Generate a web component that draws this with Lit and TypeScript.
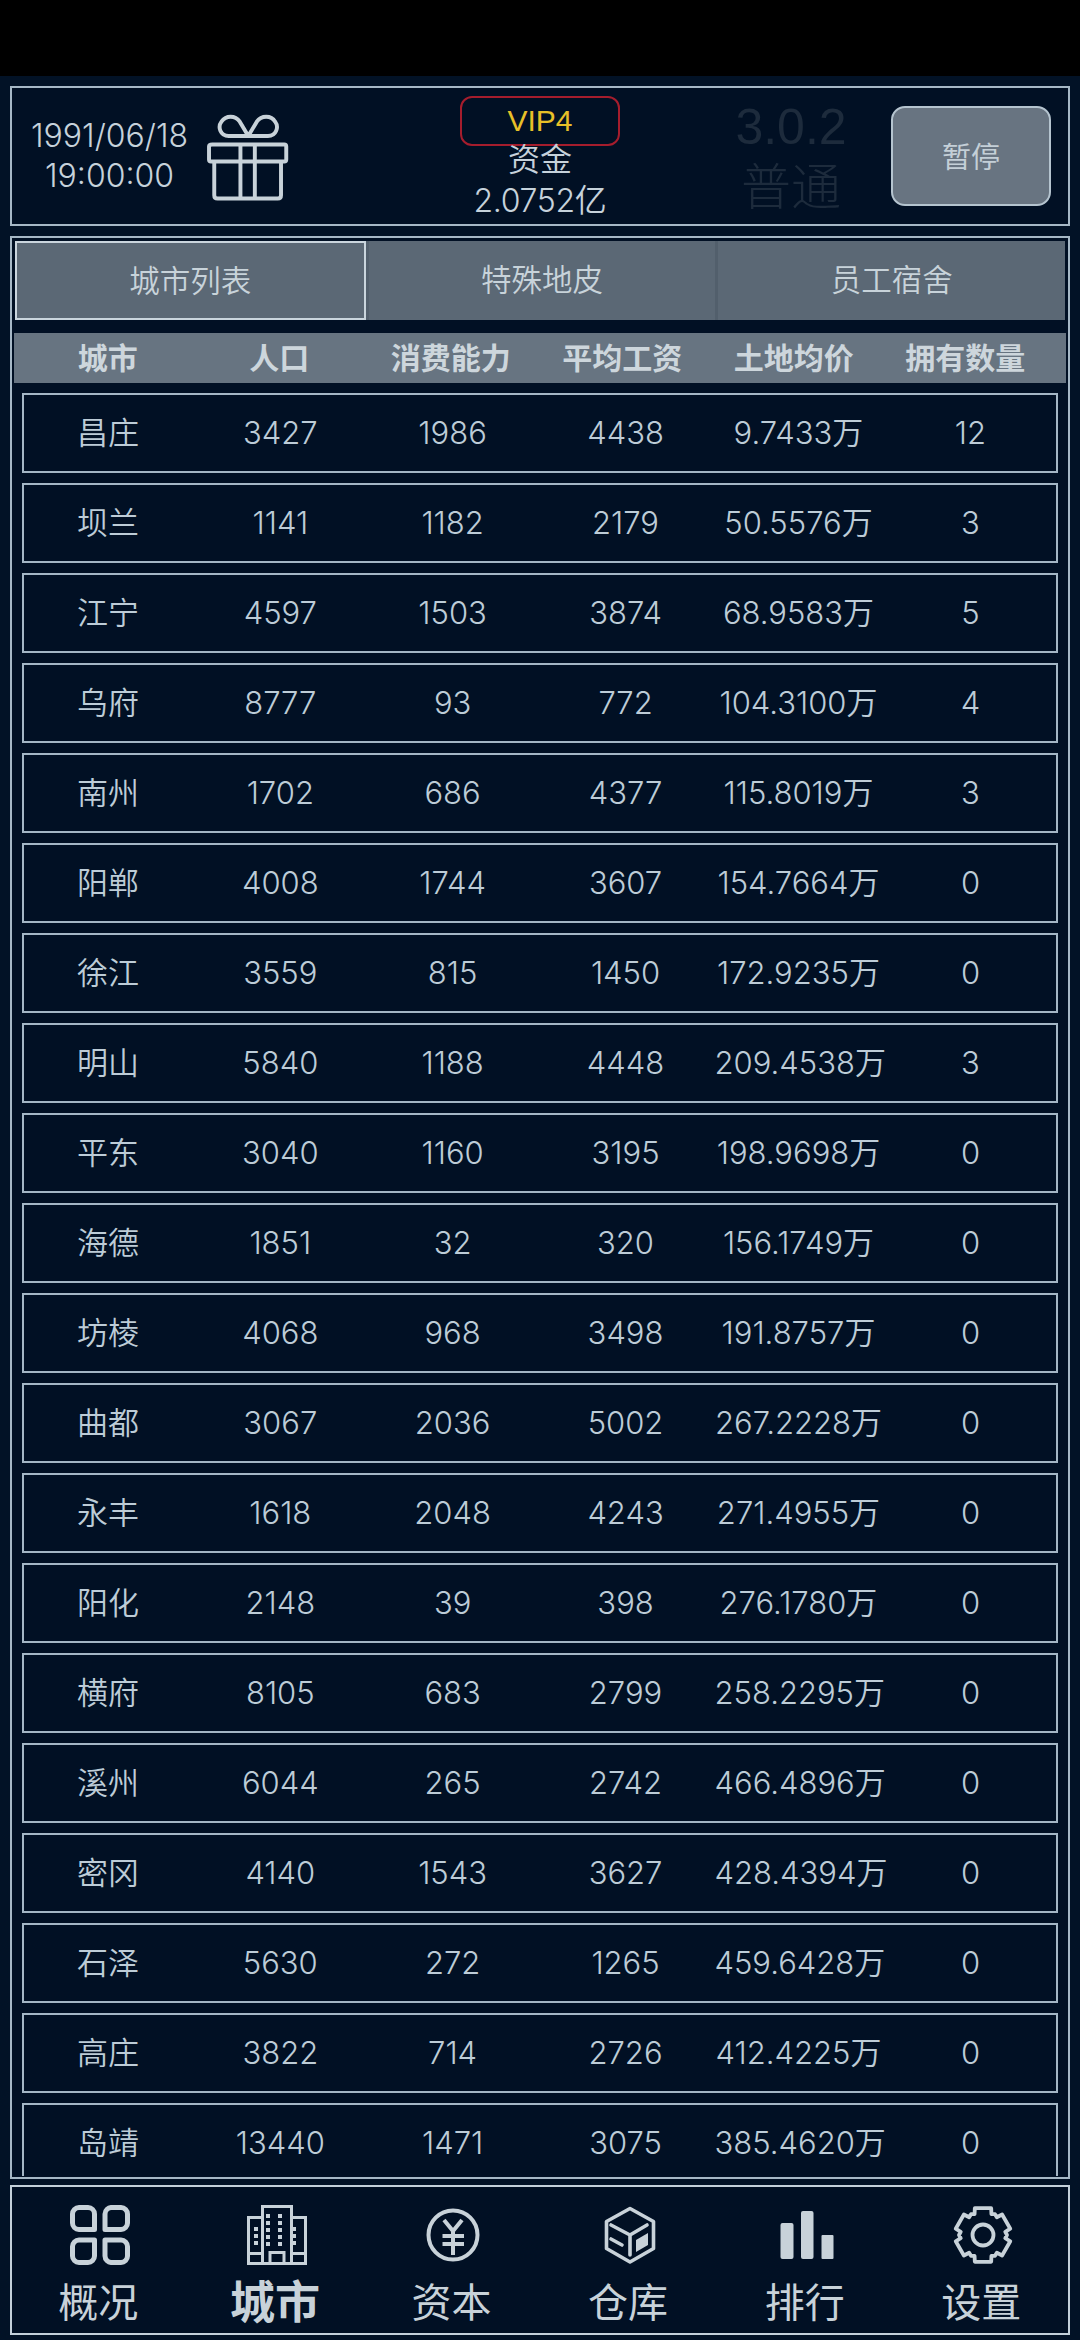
import { LitElement, html, css, svg } from "lit";
import { customElement } from "lit/decorators.js";

const ROWS: string[][] = [
  ["昌庄","3427","1986","4438","9.7433万","12"],
  ["坝兰","1141","1182","2179","50.5576万","3"],
  ["江宁","4597","1503","3874","68.9583万","5"],
  ["乌府","8777","93","772","104.3100万","4"],
  ["南州","1702","686","4377","115.8019万","3"],
  ["阳郸","4008","1744","3607","154.7664万","0"],
  ["徐江","3559","815","1450","172.9235万","0"],
  ["明山","5840","1188","4448","209.4538万","3"],
  ["平东","3040","1160","3195","198.9698万","0"],
  ["海德","1851","32","320","156.1749万","0"],
  ["坊棱","4068","968","3498","191.8757万","0"],
  ["曲都","3067","2036","5002","267.2228万","0"],
  ["永丰","1618","2048","4243","271.4955万","0"],
  ["阳化","2148","39","398","276.1780万","0"],
  ["横府","8105","683","2799","258.2295万","0"],
  ["溪州","6044","265","2742","466.4896万","0"],
  ["密冈","4140","1543","3627","428.4394万","0"],
  ["石泽","5630","272","1265","459.6428万","0"],
  ["高庄","3822","714","2726","412.4225万","0"],
  ["岛靖","13440","1471","3075","385.4620万","0"],
];
const HEAD = ["城市","人口","消费能力","平均工资","土地均价","拥有数量"];

function gearPath(cx: number, cy: number): string {
  const pts: string[] = [];
  const p = (r: number, deg: number) => {
    const a = ((deg - 90) * Math.PI) / 180;
    return `${(cx + r * Math.cos(a)).toFixed(2)} ${(cy + r * Math.sin(a)).toFixed(2)}`;
  };
  for (let i = 0; i < 6; i++) {
    const a = i * 60;
    pts.push(p(22.5, a - 22), p(28, a - 17), p(28, a + 17), p(22.5, a + 22), p(24, a + 30));
  }
  return "M" + pts.join("L") + "Z";
}

const windows: number[][] = [];
for (const y of [9, 16, 23, 30, 37]) for (const x of [19, 31]) windows.push([x, y]);
for (const y of [22, 29, 36]) { windows.push([7, y]); windows.push([45, y]); }

const ICONS = [
  svg`<svg class="ic" width="60" height="60" viewBox="0 0 60 60" fill="none" stroke="currentColor" stroke-width="5" stroke-linejoin="round">
    <path d="M9 2.5H18A6.5 6.5 0 0 1 24.5 9V24.5H9A6.5 6.5 0 0 1 2.5 18V9A6.5 6.5 0 0 1 9 2.5Z"/>
    <path d="M42 2.5H51A6.5 6.5 0 0 1 57.500 9V18A6.500 6.500 0 0 1 51 24.5H35V9A6.500 6.500 0 0 1 42 2.5Z"/>
    <path d="M9 35H24.5V51A6.500 6.500 0 0 1 18 57.500H9A6.500 6.500 0 0 1 2.5 51V41.500A6.500 6.500 0 0 1 9 35Z"/>
    <path d="M35 35H51A6.500 6.500 0 0 1 57.500 41.500V51A6.500 6.500 0 0 1 51 57.500H42A6.500 6.500 0 0 1 35 51Z"/>
  </svg>`,
  svg`<svg class="ic" width="60" height="60" viewBox="0 0 60 60" fill="none" stroke="currentColor" stroke-width="3">
    <path d="M15.500 58.500V1.500H44.500V58.500"/>
    <path d="M15.500 12.500H1.500V58.500H58.500V12.500H44.500"/>
    <path d="M1.500 48.500H15.500M44.500 48.500H58.500M1.500 58.500H58.500"/>
    <path d="M23 58V47.500H37V58"/>
    <g fill="currentColor" stroke="none">${windows.map(([x, y]) => svg`<rect x=${x} y=${y} width="4" height="4"/>`)}</g>
  </svg>`,
  svg`<svg class="ic" width="60" height="60" viewBox="0 0 60 60" fill="none" stroke="currentColor" stroke-width="4">
    <circle cx="30" cy="30" r="24.500"/>
    <path d="M21 15L30 26L39 15M19.500 31H41M19.500 39H41M30 26V50"/>
  </svg>`,
  svg`<svg class="ic" width="60" height="60" viewBox="0 0 60 60" fill="none" stroke="currentColor" stroke-width="3.600" stroke-linejoin="round" stroke-linecap="round">
    <path d="M30 3.500L53.500 16.500V43.500L30 57L6.500 43.500V16.500Z"/>
    <path d="M11 20L30 30L47 20M30 30V50M11 34L22 40"/>
    <path d="M36 35L48 28V40L36 47Z" fill="currentColor" stroke="none"/>
  </svg>`,
  svg`<svg class="ic" width="60" height="60" viewBox="0 0 60 60" fill="currentColor">
    <rect x="3.500" y="18" width="13" height="36" rx="2"/>
    <rect x="24" y="6" width="12.500" height="48" rx="2"/>
    <rect x="44.500" y="30" width="12" height="24" rx="1"/>
  </svg>`,
  svg`<svg class="ic" width="60" height="60" viewBox="0 0 60 60" fill="none" stroke="currentColor" stroke-width="3.800" stroke-linejoin="round">
    <path d=${gearPath(30, 30)}/>
    <circle cx="30" cy="30" r="10.500"/>
  </svg>`,
];
const NAV = ["概况","城市","资本","仓库","排行","设置"];

@customElement("app-root")
export class AppRoot extends LitElement {
  static styles = css`
    :host {
      display: block;
      width: 1080px;
      height: 2340px;
      overflow: hidden;
      background: #021226;
      color: #b9c8d4;
      font-family: Inter, "Noto Sans CJK SC", sans-serif;
      font-weight: 350;
    }
    .status { height: 76px; background: #000; }
    .page {
      height: 2264px;
      box-sizing: border-box;
      padding: 10px 10px 5px;
      display: flex;
      flex-direction: column;
    }
    .top {
      height: 140px;
      flex: none;
      box-sizing: border-box;
      border: 2px solid #a6b8c6;
      background: #011024;
      position: relative;
      display: flex;
      align-items: center;
    }
    .clock {
      width: 157px;
      margin-left: 19px;
      text-align: center;
      font-size: 32px;
      line-height: 40px;
      color: #c6d2db;
      white-space: nowrap;
    }
    .gift { width: 108px; height: 108px; margin-left: 4px; color: #c8d2d9; flex: none; }
    .money {
      width: 210px;
      margin-left: 135px;
      display: flex;
      flex-direction: column;
      align-items: center;
      color: #c6d2db;
      font-size: 32px;
      height: 136px;
      justify-content: flex-start;
      white-space: nowrap;
    }
    .vip {
      box-sizing: border-box;
      width: 160px;
      height: 50px;
      margin-top: 8px;
      border: 2px solid #a51d2d;
      border-radius: 12px;
      color: #e8c028;
      font-family: "Liberation Sans", sans-serif;
      font-weight: 400;
      font-size: 30px;
      line-height: 46px;
      text-align: center;
    }
    .m1 { line-height: 28px; }
    .m2 { line-height: 50px; margin-top: 2px; letter-spacing: -0.3px; }
    .ver {
      width: 130px;
      margin-left: 81px;
      margin-top: -2px;
      text-align: center;
      color: #1d2b3c;
      font-size: 50px;
      line-height: 52px;
      font-family: "Liberation Sans", "Noto Sans CJK SC", sans-serif;
      font-weight: 400;
    }
    .ver div + div { font-size: 50px; font-family: "Noto Sans CJK SC", sans-serif; font-weight: 300; margin-top: 4px; }
    .pause {
      position: absolute;
      left: 879px;
      top: 18px;
      box-sizing: border-box;
      width: 160px;
      height: 100px;
      border: 2px solid #b5c4cf;
      border-radius: 14px;
      background: #687481;
      color: #c4cfd7;
      font-size: 29px;
      font-weight: 400;
      padding-bottom: 3px;
      display: flex;
      align-items: center;
      justify-content: center;
    }
    .main {
      margin-top: 10px;
      height: 1943px;
      flex: none;
      box-sizing: border-box;
      border: 2px solid #a6b8c6;
      padding: 3px 3px 1px;
      display: flex;
      flex-direction: column;
      background: #011024;
    }
    .tabs { display: flex; height: 79px; flex: none; background: #5b6875; }
    .tab {
      flex: 1;
      box-sizing: border-box;
      display: flex;
      align-items: center;
      justify-content: center;
      font-size: 30.500px;
      color: #c8d3da;
      border-left: 3px solid #525f6c;
      padding-bottom: 5px;
    }
    .tab:first-child { border-left: none; }
    .tab.on { border: 2px solid #cad5dd; padding-bottom: 4px; }
    .thead {
      margin: 13px -1px 0;
      height: 50px;
      flex: none;
      background: #677481;
      display: grid;
      grid-template-columns: 8px repeat(6, 171.500px);
      align-items: center;
      text-align: center;
      font-size: 30px;
      font-weight: 700;
      color: #cdd6dc;
      padding-bottom: 4px;
      box-sizing: border-box;
    }
    .list {
      flex: 1;
      min-height: 0;
      overflow: hidden;
      padding: 10px 7px 0;
      display: flex;
      flex-direction: column;
      gap: 10px;
    }
    .row {
      flex: none;
      height: 80px;
      box-sizing: border-box;
      border: 2px solid #a4b6c5;
      padding-bottom: 1px;
      display: grid;
      grid-template-columns: 168px 176.600px 168px 177.900px 168px 176px;
      align-items: center;
      text-align: center;
      font-size: 31px;
      line-height: 40px;
      color: #bdccd7;
      white-space: nowrap;
    }
    .nav {
      margin-top: 6px;
      height: 150px;
      flex: none;
      box-sizing: border-box;
      border: 2px solid #c3d0da;
      display: grid;
      grid-template-columns: repeat(6, 176.600px);
      background: #011024;
      color: #c8d2d9;
    }
    .item {
      display: flex;
      flex-direction: column;
      align-items: center;
      padding-top: 18px;
      font-size: 40px;
      line-height: 50px;
      font-weight: 400;
    }
    .ic { display: block; flex: none; margin-bottom: 13px; }
    .lb { padding-right: 4px; }
    .item.on { font-weight: 700; font-size: 45px; }
  `;

  render() {
    return html`
      <div class="status"></div>
      <div class="page">
        <div class="top">
          <div class="clock"><div>1991/06/18</div><div>19:00:00</div></div>
          <svg class="gift" viewBox="0 0 330 330" fill="none" stroke="currentColor" stroke-width="12" stroke-linejoin="round">
            <path d="M172 104H112C86 104 78 76 90 60C104 40 132 40 146 60L172 104L198 60C212 40 242 40 254 60C266 76 258 104 232 104H172Z"/>
            <path d="M62 130H282Q288 130 288 136V176Q288 182 282 182H58Q52 182 52 176V136Q52 130 62 130Z"/>
            <path d="M68 182V285Q68 295 78 295H262Q272 295 272 285V182"/>
            <path d="M148 130V295M192 130V295"/>
          </svg>
          <div class="money">
            <div class="vip">VIP4</div>
            <div class="m1">资金</div>
            <div class="m2">2.0752亿</div>
          </div>
          <div class="ver"><div>3.0.2</div><div>普通</div></div>
          <div class="pause">暂停</div>
        </div>
        <div class="main">
          <div class="tabs">
            <div class="tab on">城市列表</div>
            <div class="tab">特殊地皮</div>
            <div class="tab">员工宿舍</div>
          </div>
          <div class="thead"><span></span>${HEAD.map((h) => html`<div>${h}</div>`)}</div>
          <div class="list">
            ${ROWS.map((r) => html`<div class="row">${r.map((c) => html`<div>${c}</div>`)}</div>`)}
          </div>
        </div>
        <div class="nav">
          ${NAV.map((n, i) => html`<div class="item ${i === 1 ? "on" : ""}">${ICONS[i]}<div class="lb">${n}</div></div>`)}
        </div>
      </div>
    `;
  }
}
